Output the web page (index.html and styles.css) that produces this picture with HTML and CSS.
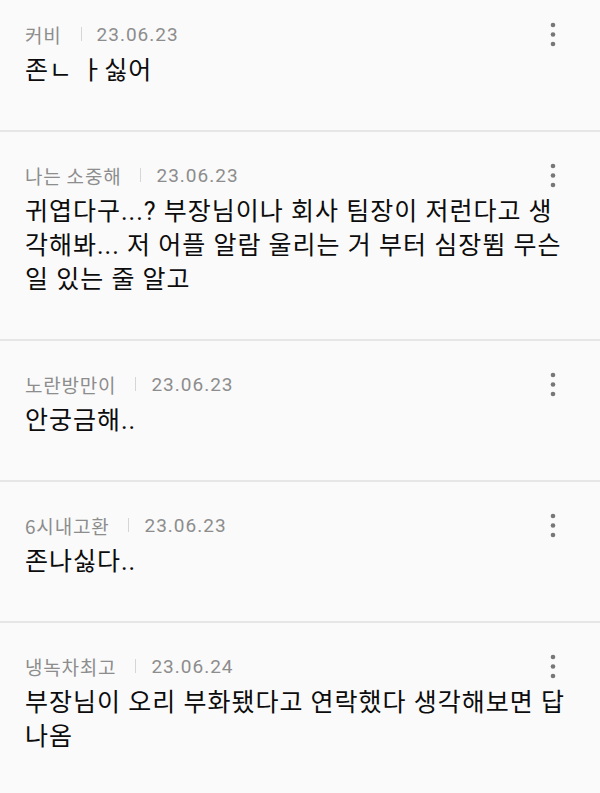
FILE: index.html
```html
<!DOCTYPE html>
<html>
  <head>
    <meta charset="utf-8">
    <title>댓글</title>
    <link rel="stylesheet" href="styles.css">
  </head>
  <body>
    <ul class="comment-list">
      <li class="comment">
        <div class="comment-head">
          <div class="meta">
            <span class="name">커비</span>
            <span class="divider"></span>
            <span class="date">23.06.23</span>
          </div>
          <button class="more" aria-label="더보기">
            <svg width="6" height="25" viewBox="0 0 6 25"><circle cx="3" cy="3" r="2.3"/><circle cx="3" cy="12.5" r="2.3"/><circle cx="3" cy="22" r="2.3"/></svg>
          </button>
        </div>
        <p class="comment-text">존ㄴ ㅏ싫어</p>
      </li>
      <li class="comment">
        <div class="comment-head">
          <div class="meta">
            <span class="name">나는 소중해</span>
            <span class="divider"></span>
            <span class="date">23.06.23</span>
          </div>
          <button class="more" aria-label="더보기">
            <svg width="6" height="25" viewBox="0 0 6 25"><circle cx="3" cy="3" r="2.3"/><circle cx="3" cy="12.5" r="2.3"/><circle cx="3" cy="22" r="2.3"/></svg>
          </button>
        </div>
        <p class="comment-text">귀엽다구...? 부장님이나 회사 팀장이 저런다고 생각해봐... 저 어플 알람 울리는 거 부터 심장뜀 무슨 일 있는 줄 알고</p>
      </li>
      <li class="comment">
        <div class="comment-head">
          <div class="meta">
            <span class="name">노란방만이</span>
            <span class="divider"></span>
            <span class="date">23.06.23</span>
          </div>
          <button class="more" aria-label="더보기">
            <svg width="6" height="25" viewBox="0 0 6 25"><circle cx="3" cy="3" r="2.3"/><circle cx="3" cy="12.5" r="2.3"/><circle cx="3" cy="22" r="2.3"/></svg>
          </button>
        </div>
        <p class="comment-text">안궁금해..</p>
      </li>
      <li class="comment">
        <div class="comment-head">
          <div class="meta">
            <span class="name">6시내고환</span>
            <span class="divider"></span>
            <span class="date">23.06.23</span>
          </div>
          <button class="more" aria-label="더보기">
            <svg width="6" height="25" viewBox="0 0 6 25"><circle cx="3" cy="3" r="2.3"/><circle cx="3" cy="12.5" r="2.3"/><circle cx="3" cy="22" r="2.3"/></svg>
          </button>
        </div>
        <p class="comment-text">존나싫다..</p>
      </li>
      <li class="comment">
        <div class="comment-head">
          <div class="meta">
            <span class="name">냉녹차최고</span>
            <span class="divider"></span>
            <span class="date">23.06.24</span>
          </div>
          <button class="more" aria-label="더보기">
            <svg width="6" height="25" viewBox="0 0 6 25"><circle cx="3" cy="3" r="2.3"/><circle cx="3" cy="12.5" r="2.3"/><circle cx="3" cy="22" r="2.3"/></svg>
          </button>
        </div>
        <p class="comment-text">부장님이 오리 부화됐다고 연락했다 생각해보면 답 나옴</p>
      </li>
    </ul>
  </body>
</html>
```

FILE: styles.css
```css
body {
  margin: 0;
  background-color: #fafafa;
  font-family: Roboto, "Noto Sans CJK KR", sans-serif;
  color: #111;
}
.comment-list {
  list-style: none;
  margin: 0;
  padding: 0;
}
.comment {
  padding: 31px 25px 42px 25px;
  border-bottom: 2px solid #e6e6e6;
}
.comment:first-child {
  padding-top: 22px;
}
.comment-head {
  display: flex;
  align-items: center;
  justify-content: space-between;
  height: 24px;
}
.meta {
  display: flex;
  align-items: center;
  font-size: 19px;
  color: #8d8d8d;
}
.name {
  font-family: "Noto Sans CJK KR", sans-serif;
  letter-spacing: 0.8px;
}
.divider {
  width: 1px;
  height: 14px;
  margin: 0 15px 0 19px;
  background-color: #d6d6d6;
}
.date {
  letter-spacing: 1px;
}
.more {
  border: none;
  background: none;
  padding: 0;
  margin-right: 19px;
  display: flex;
  fill: #777;
  cursor: pointer;
}
.comment-text {
  margin: 8px 0 0 0;
  font-size: 25px;
  letter-spacing: 1px;
  line-height: 34px;
  color: #0c0c0c;
  font-family: Roboto, "Noto Sans CJK KR", sans-serif;
}
```
